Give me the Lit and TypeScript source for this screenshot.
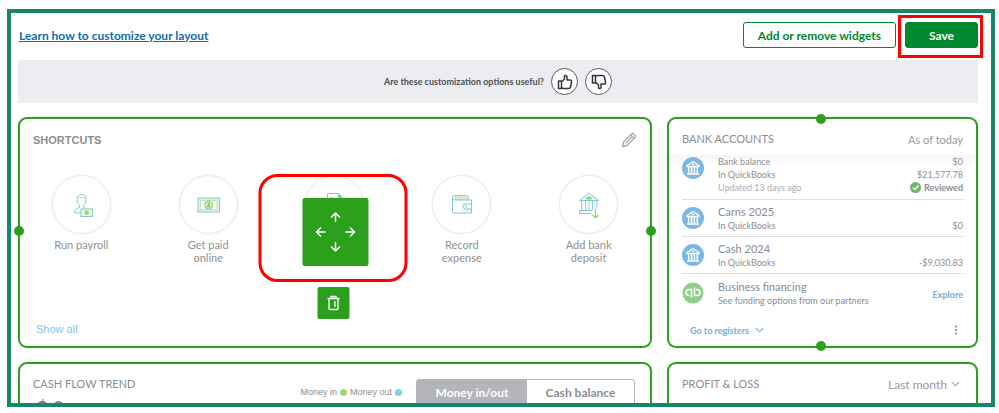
import { LitElement, html, css, svg } from "lit";
import { customElement, property } from "lit/decorators.js";

const payrollIcon = svg`
  <g fill="none" stroke="#7fc9cf">
    <path d="M10.500 13.500c-2-1.500-2.500-4-2.500-6C8 4.500 9.500 2.500 12.500 2.500S17 4.500 17 7.500c0 2-.5 4.500-2.500 6"/>
    <path d="M8.500 5.500c2 .5 6 .5 8 0" stroke="#a5dbe0"/>
    <path d="M10.500 13.500v2c-3 1-5 2-5 5.500h6M14.500 13.500v2l2 .8"/>
  </g>
  <rect x="12" y="17" width="11.500" height="7.500" fill="#eef8dd" stroke="#7fc9cf"/>
  <circle cx="17.700" cy="20.700" r="2.300" fill="#a8d57c"/>`;

const cashIcon = svg`
  <rect x="2" y="6" width="21.500" height="14" fill="#d8f2f5" stroke="#7fc9cf"/>
  <rect x="4.500" y="8.500" width="16.500" height="9" fill="#fff" stroke="#c4e6a4"/>
  <circle cx="12.700" cy="13" r="4" fill="#dff2c9" stroke="#8fcf66"/>
  <path d="M12.700 10.300a1.400 1.400 0 0 1 .9 2.500l1.600 2.600h-5l1.600-2.600a1.400 1.400 0 0 1 .9-2.500z" fill="#8fcf66"/>`;

const invoiceIcon = svg`
  <path d="M4.500 1.500h11l4 4.500v17h-15z" fill="#fff" stroke="#7fc9cf"/>
  <path d="M15 1.500v4.500h5z" fill="#7fc9cf"/>
  <rect x="7" y="5" width="3" height="2" fill="#a8d57c"/>`;

const walletIcon = svg`
  <path d="M2.500 20.500v-15a2 2 0 0 1 2-2h12a2 2 0 0 1 2 2v2" fill="none" stroke="#7fc9cf"/>
  <rect x="5" y="5" width="12" height="3" fill="#dff2c9" stroke="#bfe3a2"/>
  <path d="M2.500 6.500a2 2 0 0 0 2 1.500h17v13h-18a1 1 0 0 1-1-1z" fill="#fff" stroke="#7fc9cf"/>
  <path d="M11 20l7-7h3v7z" fill="#dff4f6"/>
  <path d="M21.500 12h-6a2.500 2.500 0 0 0 0 5h6z" fill="#fff" stroke="#7fc9cf"/>
  <circle cx="16" cy="14.500" r="1" fill="#8fcf66"/>`;

const depositIcon = svg`
  <path d="M2.500 8.500L12 1l9.500 7.500z" fill="#eefafa" stroke="#7fc9cf"/>
  <path d="M9 7.500a3 3 0 0 1 6 0z" fill="#8fcf66"/>
  <path d="M4.500 9v9M8.500 9v9M12 9v9M15.500 9v9M20 9v7" stroke="#8ed2da" stroke-width="1" fill="none"/>
  <path d="M6 9v9M17.500 9v9" stroke="#d5f0f3" fill="none"/>
  <path d="M2.500 18v3.500h11M3 18.500h12" fill="none" stroke="#7fc9cf"/>
  <path d="M18.500 17v9M15.500 23l3 3 3-3" fill="none" stroke="#9bd37a" stroke-width="1.300"/>`;

const shortcuts = [
  { label: "Run payroll", icon: payrollIcon },
  { label: "Get paid online", icon: cashIcon },
  { label: "", icon: invoiceIcon },
  { label: "Record expense", icon: walletIcon },
  { label: "Add bank deposit", icon: depositIcon },
];

const thumb = svg`<path d="M1.500 7h3v7.500h-3zM4.500 8l3-3V2.500c0-1.500 2.500-1.500 2.500.5v3h3c1.300 0 1.800.8 1.500 2l-1 5c-.2 1-.8 1.500-1.700 1.500H7c-1 0-1.500-.5-2.500-.5" fill="none" stroke="#33373d" stroke-width="1.500" stroke-linejoin="round"/>`;

const bankIcon = html`<svg class="badge" viewBox="0 0 22 22" aria-hidden="true">
  <circle cx="11" cy="11" r="11" fill="#7db8e2"/>
  <path d="M5 8.500L11 4.500l6 4v1H5zM5 17h12" fill="none" stroke="#fff" stroke-width="1.300" stroke-linejoin="round"/>
  <path d="M9.500 8a1.500 1.500 0 0 1 3 0z" fill="#fff"/>
  <path d="M6.700 9.500v6.500M9.600 9.500v6.500M12.400 9.500v6.500M15.300 9.500v6.500" stroke="#fff" stroke-width="1.500"/>
</svg>`;

const chevron = html`<svg class="chevron" viewBox="0 0 10 6" aria-hidden="true"><path d="M1 1l4 4 4-4" fill="none" stroke="currentColor" stroke-width="1.200"/></svg>`;

@customElement("widget-card")
class WidgetCard extends LitElement {
  @property() handles = "";

  static styles = css`
    :host {
      display: block;
      position: relative;
      border-radius: 9px;
      box-shadow: inset 0 0 0 2px #2ca01c, 0 0 1px #8fd07f;
      background: #fff;
    }
    .dot {
      position: absolute;
      width: 10px;
      height: 10px;
      border-radius: 50%;
      background: #2ca01c;
    }
    .left { left: -4px; top: calc(50% - 7px); }
    .right { right: -4px; top: calc(50% - 7px); }
    .top { top: -3px; left: calc(50% - 7px); }
    .bottom { bottom: -3px; left: calc(50% - 7px); }
  `;

  render() {
    const sides = this.handles ? this.handles.split(" ") : [];
    return html`<slot></slot>${sides.map((s) => html`<span class="dot ${s}"></span>`)}`;
  }
}

@customElement("app-root")
class AppRoot extends LitElement {
  static styles = css`
    :host {
      display: block;
      box-sizing: border-box;
      height: 100vh;
      padding: 9px 4px 6px 7px;
      background: #fff;
      color: #8a8d92;
      font: 12px/13px Lato, "Liberation Sans", sans-serif;
    }
    * { box-sizing: border-box; }
    button, select {
      margin: 0;
      padding: 0;
      border: 0;
      background: none;
      color: inherit;
      font: inherit;
      cursor: pointer;
    }
    a { text-decoration: none; }
    svg { display: block; flex: none; }
    h2, p { margin: 0; }
    .frame {
      height: 100%;
      overflow: hidden;
      border: 4px solid #17866a;
      padding: 0 13px 0 7px;
    }
    .toolbar {
      display: flex;
      align-items: center;
      gap: 9px;
      height: 47px;
      padding-bottom: 3px;
      color: #00892e;
      font-weight: 700;
    }
    .learn {
      margin: 0 auto 0 1px;
      color: #0f6cb0;
      font-size: 12px;
      text-decoration: underline;
    }
    .btn {
      height: 26px;
      border: 1px solid #00892e;
      border-radius: 3px;
      padding: 0 14px;
      font-size: 12px;
    }
    .primary {
      width: 73px;
      background: #00892e;
      color: #fff;
    }
    .marked { position: relative; display: flex; }
    .marked::after {
      content: "";
      position: absolute;
      inset: -7px -5px -10px -7px;
      border: 3px solid #f00;
      pointer-events: none;
    }
    .survey {
      display: flex;
      align-items: center;
      justify-content: center;
      gap: 7px;
      height: 43px;
      margin-bottom: 14px;
      background: #ebedf1;
      color: #4b4e55;
      font-size: 9px;
      font-weight: 700;
    }
    .round {
      display: grid;
      place-items: center;
      width: 27px;
      height: 27px;
      border: 1px solid #55585f;
      border-radius: 50%;
      background: #fff;
    }
    .round svg { width: 16px; height: 16px; }
    .flip { transform: rotate(180deg) scaleX(-1); }
    .grid {
      display: grid;
      grid-template-columns: 634fr 311fr;
      gap: 14px 15px;
    }
    .head {
      display: flex;
      align-items: center;
      justify-content: space-between;
      padding: 6px 15px 0;
      height: 38px;
    }
    h2 { font-size: 11px; font-weight: 400; line-height: 16px; }
    .arial { font-family: "Liberation Sans", Arial, sans-serif; }
    .arial.strong { font-weight: 700; }
    .shortcuts { display: flex; flex-direction: column; min-height: 231px; }
    .shortcuts .head { height: 40px; }
    .pencil { width: 16px; height: 16px; }
    .items {
      display: grid;
      grid-template-columns: repeat(5, 1fr);
      margin-top: 18px;
      color: #8f9195;
      font-size: 11px;
    }
    .item {
      display: flex;
      flex-direction: column;
      align-items: center;
      gap: 4px;
    }
    .disc {
      display: grid;
      place-items: center;
      width: 59px;
      height: 59px;
      border: 1px solid #e8e8ea;
      border-radius: 50%;
      box-shadow: 0 0 2px #e6e6e8;
    }
    .disc svg { width: 24px; height: 26px; }
    .label { width: 60px; text-align: center; }
    .all {
      display: block;
      padding: 59px 18px 0;
      color: #8cc0e6;
      font-size: 11px;
    }
    .controls {
      position: absolute;
      top: 57px;
      left: calc(50% - 2px);
      transform: translateX(-50%);
      display: flex;
      flex-direction: column;
      align-items: center;
      gap: 5px;
    }
    .ring {
      width: 149px;
      height: 108px;
      border: 3px solid #f00;
      border-radius: 19px;
      display: flex;
      justify-content: center;
      padding: 21px 0 0 4px;
    }
    .move, .trash {
      display: grid;
      place-items: center;
      border-radius: 2px;
      background: #2ca01c;
    }
    .move { width: 66px; height: 68px; }
    .move svg { width: 40px; height: 40px; }
    .trash { width: 32px; height: 32px; }
    .trash svg { width: 14px; height: 16px; }
    .accounts { font-size: 9px; }
    .asof { font-size: 11px; color: #96999e; }
    .list {
      margin: 0 2px;
      padding: 0 13px;
      background: linear-gradient(#f5f5f6, #fff 10px);
    }
    .row {
      display: grid;
      grid-template-columns: 24px 1fr auto;
      column-gap: 12px;
      padding: 0 0 5px;
      border-bottom: 1px solid #dcdee0;
    }
    .row.first { height: 45px; }
    .row.acct { height: 37px; padding-top: 5px; }
    .row.last { border: 0; height: 43px; padding-top: 6px; }
    .badge { width: 22px; height: 22px; margin-top: 2px; }
    .name { font-size: 11px; line-height: 14px; }
    .dim { color: #abadb1; }
    .amt { text-align: right; align-self: end; }
    .first .amt { align-self: start; }
    .ok { display: flex; align-items: center; justify-content: flex-end; gap: 3px; font-weight: 700; height: 12px; }
    .ok svg { width: 11px; height: 11px; }
    .blue { color: #6fb0df; font-weight: 700; }
    .row .blue { padding-top: 8px; }
    .foot {
      display: flex;
      align-items: center;
      justify-content: space-between;
      padding: 5px 18px 9px 23px;
      height: 30px;
    }
    .foot .blue { display: flex; align-items: center; gap: 6px; }
    .chevron { width: 9px; height: 6px; }
    .dots { width: 8px; height: 10px; }
    .cash { display: flex; justify-content: space-between; padding: 14px 17px 0 15px; min-height: 120px; }
    .big { font-size: 20px; line-height: 24px; padding: 3px; color: #77797e; }
    .right { display: flex; align-items: flex-start; gap: 14px; }
    .legend { display: flex; align-items: center; gap: 3px; font-size: 9px; padding-top: 10px; }
    .key { width: 7px; height: 7px; border-radius: 50%; background: #a2d977; }
    .key.out { background: #7fd2de; }
    .toggle {
      display: flex;
      height: 26px;
      margin-top: 3px;
      border: 1px solid #b4b5ba;
      border-radius: 3px;
      font-weight: 700;
    }
    .toggle button { width: 107px; }
    .toggle .on { width: 110px; background: #b4b5ba; color: #fff; }
    .period { display: flex; align-items: center; gap: 4px; padding-right: 3px; color: #96999e; }
    .period select { appearance: none; font-size: 12px; }
    .period .chevron { pointer-events: none; }
  `;

  render() {
    return html`<main class="frame">
      <div class="toolbar">
        <a class="learn" href="#layout">Learn how to customize your layout</a>
        <button class="btn">Add or remove widgets</button>
        <div class="marked"><button class="btn primary">Save</button></div>
      </div>
      <div class="survey">
        <span>Are these customization options useful?</span>
        <button class="round" aria-label="Useful"><svg viewBox="0 0 16 16">${thumb}</svg></button>
        <button class="round" aria-label="Not useful"><svg class="flip" viewBox="0 0 16 16">${thumb}</svg></button>
      </div>
      <div class="grid">
        <widget-card handles="left right">
          <section class="shortcuts">
            <div class="head">
              <h2 class="arial strong">SHORTCUTS</h2>
              <button aria-label="Edit shortcuts">
                <svg class="pencil" viewBox="0 0 16 16"><path d="M1.500 14.500l1-4.500 8-8c1.500-1.500 5 1.500 3.500 3.500l-8 8zM9.500 3l3.500 3.500M4.500 11.500l6-6" fill="none" stroke="#a6a8ac" stroke-width="1.300" stroke-linejoin="round"/></svg>
              </button>
            </div>
            <div class="items">
              ${shortcuts.map(
                (s) => html`<button class="item">
                  <span class="disc"><svg viewBox="0 0 24 26">${s.icon}</svg></span>
                  <span class="label">${s.label}</span>
                </button>`
              )}
            </div>
            <a class="all arial" href="#all">Show all</a>
          </section>
          <div class="controls">
            <div class="ring">
              <button class="move" aria-label="Move widget">
                <svg viewBox="0 0 40 40"><path d="M20 10V1M15.500 5.500L20 1l4.500 4.500M20 30v9M15.500 34.500L20 39l4.500-4.500M10 20H1M5.500 15.500L1 20l4.500 4.500M30 20h9M34.500 15.500L39 20l-4.500 4.500" fill="none" stroke="#fff" stroke-width="1.500"/></svg>
              </button>
            </div>
            <button class="trash" aria-label="Remove widget">
              <svg viewBox="0 0 14 16"><path d="M1 3.500h12M4.500 3.500V1.500h5v2M2.500 3.500v10a1 1 0 0 0 1 1h7a1 1 0 0 0 1-1v-10M8.500 6v6" fill="none" stroke="#fff" stroke-width="1.300"/></svg>
            </button>
          </div>
        </widget-card>

        <widget-card handles="top bottom">
          <section class="accounts">
            <div class="head">
              <h2>BANK ACCOUNTS</h2>
              <span class="asof">As of today</span>
            </div>
            <div class="list">
              <div class="row first">
                ${bankIcon}
                <div><p>Bank balance</p><p>In QuickBooks</p><p class="dim">Updated 13 days ago</p></div>
                <div class="amt"><p>$0</p><p>$21,577.78</p>
                  <p class="ok"><svg viewBox="0 0 11 11"><circle cx="5.500" cy="5.500" r="5.500" fill="#6cb86a"/><path d="M3 5.500l2 2 3.500-4" fill="none" stroke="#fff" stroke-width="1.400"/></svg>Reviewed</p>
                </div>
              </div>
              <div class="row acct">
                ${bankIcon}
                <div><p class="name">Carns 2025</p><p>In QuickBooks</p></div>
                <div class="amt">$0</div>
              </div>
              <div class="row acct">
                ${bankIcon}
                <div><p class="name">Cash 2024</p><p>In QuickBooks</p></div>
                <div class="amt">-$9,030.83</div>
              </div>
              <div class="row last">
                <svg class="badge" viewBox="0 0 22 22" aria-hidden="true">
                  <circle cx="11" cy="11" r="10.500" fill="#8fcf8a"/>
                  <path d="M9.500 15.500v-8H7a3 3 0 0 0 0 6h.8M12.500 5.500v8H15a3 3 0 0 0 0-6h-.8" fill="none" stroke="#fff" stroke-width="1.500"/>
                </svg>
                <div><p class="name">Business financing</p><p>See funding options from our partners</p></div>
                <a class="blue" href="#explore">Explore</a>
              </div>
            </div>
            <div class="foot">
              <button class="blue">Go to registers ${chevron}</button>
              <button aria-label="More">
                <svg class="dots" viewBox="0 0 8 10"><g fill="#77797e"><circle cx="4" cy="1.500" r="1"/><circle cx="4" cy="5" r="1"/><circle cx="4" cy="8.500" r="1"/></g></svg>
              </button>
            </div>
          </section>
        </widget-card>

        <widget-card>
          <section class="cash">
            <div><h2>CASH FLOW TREND</h2><p class="big">$ 0</p></div>
            <div class="right">
              <div class="legend arial"><span>Money in</span><i class="key"></i><span>Money out</span><i class="key out"></i></div>
              <div class="toggle"><button class="on">Money in/out</button><button>Cash balance</button></div>
            </div>
          </section>
        </widget-card>

        <widget-card>
          <section class="head">
            <h2>PROFIT &amp; LOSS</h2>
            <label class="period">
              <select aria-label="Period"><option>Last month</option></select>${chevron}
            </label>
          </section>
        </widget-card>
      </div>
    </main>`;
  }
}
